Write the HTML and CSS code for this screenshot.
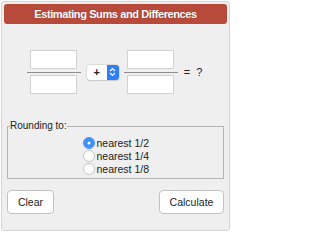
FILE: index.html
```html
<!DOCTYPE html>
<html>
<head>
<meta charset="utf-8">
<link rel="stylesheet" href="styles.css">
</head>
<body>
<div class="panel">
  <div class="header">Estimating Sums and Differences</div>
  <div class="row">
    <div class="frac">
      <div class="box"></div>
      <div class="bar"></div>
      <div class="box"></div>
    </div>
    <div class="select">
      <span class="op">+</span>
      <span class="arrows">
        <svg width="7" height="10" viewBox="0 0 7 10"><path d="M1 4 L3.5 1.5 L6 4 M1 6 L3.5 8.5 L6 6" fill="none" stroke="#fff" stroke-width="1.2"/></svg>
      </span>
    </div>
    <div class="frac">
      <div class="box"></div>
      <div class="bar"></div>
      <div class="box"></div>
    </div>
    <div class="eq">= ?</div>
  </div>
  <fieldset class="round">
    <legend class="legend">Rounding to:</legend>
    <div class="opts">
      <label class="opt"><span class="radio on"></span>nearest 1/2</label>
      <label class="opt"><span class="radio"></span>nearest 1/4</label>
      <label class="opt"><span class="radio"></span>nearest 1/8</label>
    </div>
  </fieldset>
  <div class="buttons">
    <button class="btn clear">Clear</button>
    <button class="btn calc">Calculate</button>
  </div>
</div>
</body>
</html>
```
FILE: styles.css
```css
html, body {
  margin: 0;
  padding: 0;
  background: #fff;
  font-family: "Liberation Sans", Arial, sans-serif;
  color: #222;
}
.panel {
  box-sizing: border-box;
  margin: 1px 0 0 1px;
  width: 229px;
  height: 230px;
  border: 1px solid #d4d4d4;
  border-radius: 3px;
  background: #efefef;
  padding: 2px;
}
.header {
  height: 20px;
  background: #b84a3b;
  border-radius: 3px;
  color: #fff;
  font-weight: bold;
  font-size: 11px;
  letter-spacing: -0.4px;
  line-height: 20px;
  text-align: center;
  text-shadow: 0 0 1px rgba(0,0,0,0.3);
}
.row {
  display: flex;
  align-items: center;
  justify-content: center;
  margin-top: 26px;
  padding-right: 2px;
}
.frac {
  display: flex;
  flex-direction: column;
  align-items: center;
  width: 54px;
}
.box {
  box-sizing: border-box;
  width: 47px;
  height: 19px;
  background: #fff;
  border: 1px solid #d2d2d2;
}
.bar {
  width: 54px;
  height: 1px;
  background: #8f8f8f;
  margin: 3px 0 2px;
}
.select {
  box-sizing: border-box;
  display: flex;
  width: 32px;
  height: 15px;
  margin: 0 5px 0 6px;
  border-radius: 3px;
  background: #fff;
  box-shadow: 0 0 0 0.5px #c8c8c8, 0 1px 1px rgba(0,0,0,0.15);
  overflow: hidden;
}
.op {
  flex: 1;
  font-size: 11px;
  font-weight: bold;
  line-height: 15px;
  text-align: center;
  color: #222;
}
.arrows {
  width: 12px;
  background: #2f7ef6;
  display: flex;
  align-items: center;
  justify-content: center;
}
.eq {
  margin-left: 6px;
  font-size: 11px;
  word-spacing: 3px;
  color: #222;
}
.round {
  box-sizing: border-box;
  width: 217px;
  height: 59px;
  margin: 26px 0 0 3px;
  padding: 4px 0 0 0;
  border: 1px solid #b5b5b5;
}
.legend {
  font-size: 10px;
  padding: 0;
  margin-left: 2px;
  line-height: 12px;
  color: #222;
}
.opts {
  display: flex;
  flex-direction: column;
  align-items: flex-start;
  width: 68px;
  margin: 0 auto;
  padding-left: 2px;
}
.opt {
  display: flex;
  align-items: center;
  height: 13px;
  font-size: 10.5px;
  white-space: nowrap;
  color: #222;
}
.radio {
  box-sizing: border-box;
  flex: none;
  width: 12px;
  height: 12px;
  border-radius: 50%;
  background: #fff;
  border: 1px solid #c6c6c6;
  margin-right: 2px;
}
.radio.on {
  background: #3d8ef7;
  border-color: #3d8ef7;
  box-shadow: inset 0 0 0 3.5px #3d8ef7, inset 0 0 0 6px #fff;
}
.buttons {
  display: flex;
  justify-content: space-between;
  margin: 11px 0 0 3px;
  width: 217px;
}
.btn {
  box-sizing: border-box;
  height: 24px;
  background: #fff;
  border: 1px solid #c2c2c2;
  border-radius: 4px;
  font-family: "Liberation Sans", Arial, sans-serif;
  font-size: 10.5px;
  color: #222;
  padding: 0;
}
.clear { width: 47px; }
.calc { width: 65px; }
```
